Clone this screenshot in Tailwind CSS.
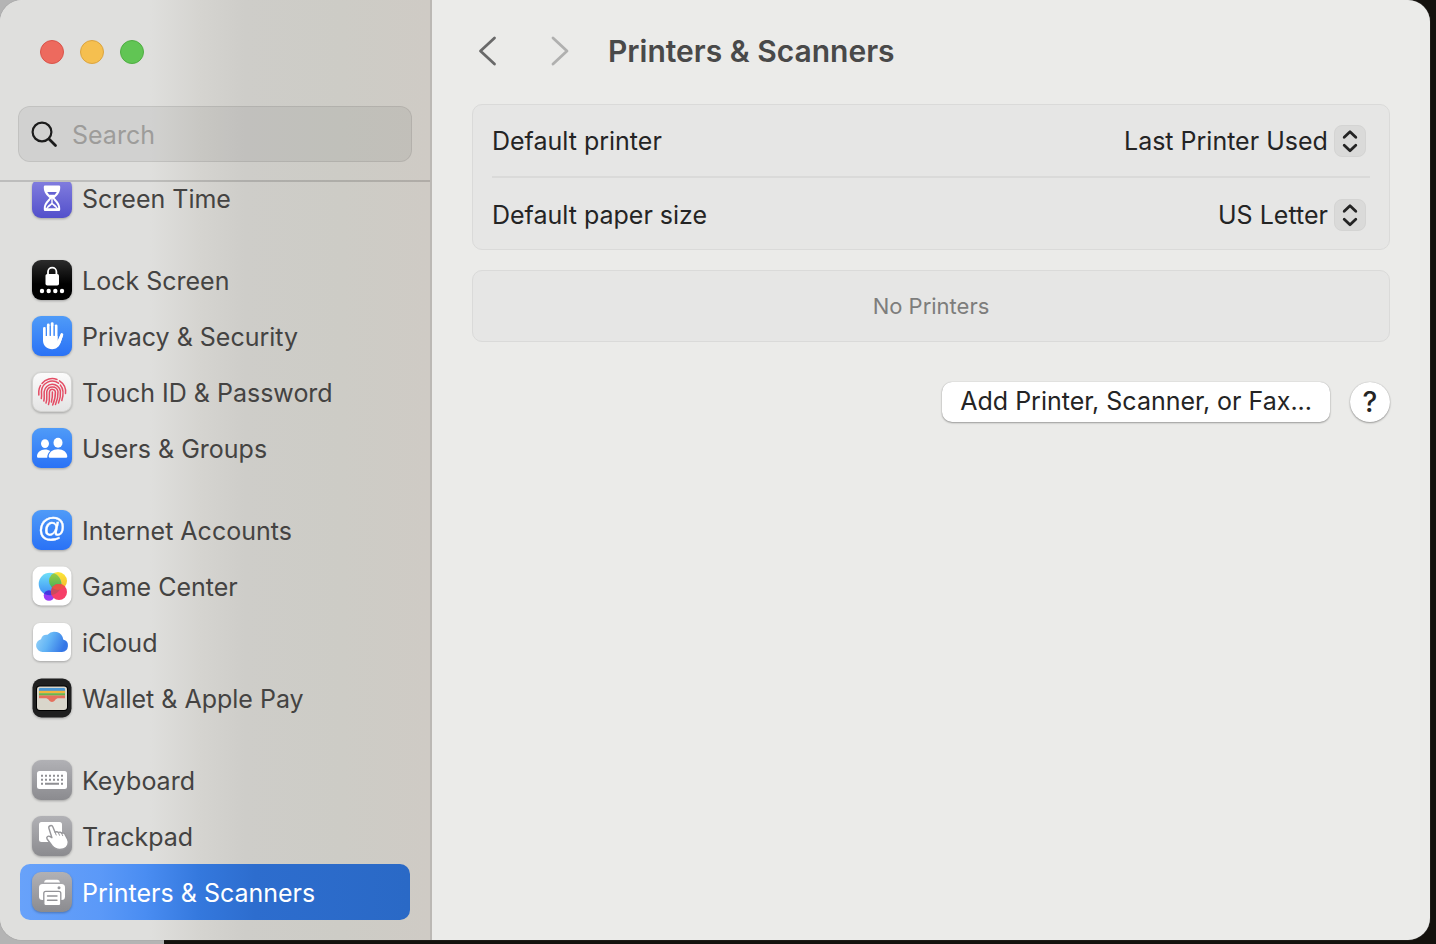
<!DOCTYPE html>
<html lang="en">
<head>
<meta charset="utf-8">
<meta name="viewport" content="width=device-width, initial-scale=1">
<title>Printers &amp; Scanners</title>
<script src="https://cdn.jsdelivr.net/npm/@tailwindcss/browser@4"></script>
</head>
<body class="font-['Inter',sans-serif] text-[25px] leading-8 text-[#242424]">
<div class="min-h-screen flex pr-1.5 pb-1 bg-[linear-gradient(90deg,#b4b4b4_164px,#14110d_164px)]">
  <div class="flex-1 min-w-0 flex rounded-[22px] overflow-hidden bg-[#ebebe9] shadow-[0_0_1px_#777]">

    <aside class="w-[432px] shrink-0 flex flex-col border-r-2 border-[#bbb8b4] bg-[linear-gradient(90deg,#dfdfdd_0px,#dfdfdd_150px,#d5d4d0_200px,#cecdc9_245px,#cdccc6_340px,#cfcbc5_430px)]">
      <header class="h-[182px] shrink-0 border-b-2 border-black/15 pt-10 px-[18px]">
        <div class="flex gap-4 pl-[22px]">
          <button aria-label="Close" class="size-6 rounded-full bg-[#ed6a5e] border border-[#d9544a]"></button>
          <button aria-label="Minimize" class="size-6 rounded-full bg-[#f5bf4f] border border-[#dba440]"></button>
          <button aria-label="Zoom" class="size-6 rounded-full bg-[#61c554] border border-[#4fae42]"></button>
        </div>
        <label class="mt-[42px] h-14 flex items-center gap-[13px] px-3 pt-0.5 rounded-xl bg-black/6 border border-black/8">
          <svg class="size-7 shrink-0" viewBox="0 0 28 28" fill="none" stroke="#1c1c1c" stroke-width="2.200" stroke-linecap="round"><circle cx="11" cy="11" r="9.400"/><path d="M18 18l6.500 6.500" stroke-width="2.800"/></svg>
          <input type="text" aria-label="Search" placeholder="Search" class="min-w-0 flex-1 bg-transparent outline-none placeholder:text-[#9d9c9a]">
        </label>
      </header>

      <nav class="flex-1 overflow-hidden px-5 text-[#444342]">
        <div class="-mt-3 flex flex-col gap-[26px]">
          <ul>
            <li><a href="#" class="h-14 flex items-center gap-[10px] px-3">
              <svg class="size-10 shrink-0 drop-shadow-[0_1px_1px_#0004]" viewBox="0 0 40 40"><defs><linearGradient id="gp" x2="0" y2="1"><stop stop-color="#8581e0"/><stop offset="1" stop-color="#5350cb"/></linearGradient></defs><rect width="40" height="40" rx="9" fill="url(#gp)"/><path d="M13 7.500h14q1.200 0 1.200 1.200v1c0 5-3 7.500-5.700 10.300 2.700 3 5.700 5.500 5.700 10.500v1q0 1.500-1.200 1.500H13q-1.200 0-1.200-1.500v-1c0-5 3-7.500 5.700-10.500-2.700-2.800-5.700-5.300-5.700-10.300v-1q0-1.200 1.200-1.200z" fill="#fff"/><path d="M15.200 14h9.600l-2 2.800h-5.600zM19.300 20.500v4.500c-1.500 1.500-4 2.500-4.600 4.800h-1c.4-4 3.800-6.300 5.600-9.300zM20.700 20.500v4.500c1.500 1.500 4 2.500 4.600 4.800h1c-.4-4-3.800-6.300-5.600-9.300zM15.500 30.300q2-1.300 4.500-3.800 2.500 2.500 4.500 3.800z" fill="#6361d2"/></svg>
              <span class="pt-0.5">Screen Time</span></a></li>
          </ul>
          <ul>
            <li><a href="#" class="h-14 flex items-center gap-[10px] px-3">
              <svg class="size-10 shrink-0 drop-shadow-[0_1px_1px_#0004]" viewBox="0 0 40 40"><defs><linearGradient id="gk" x2="0" y2="1"><stop stop-color="#2c2c2c"/><stop offset=".6" stop-color="#000"/></linearGradient></defs><rect width="40" height="40" rx="9" fill="url(#gk)"/><rect x="13.500" y="14" width="13.500" height="11.500" rx="1.800" fill="#fff"/><path d="M16 15v-3.200a4.200 4.200 0 0 1 8.400 0V15" fill="none" stroke="#fff" stroke-width="1.800"/><g fill="#fff"><circle cx="10" cy="31" r="2.200"/><circle cx="16.700" cy="31" r="2.200"/><circle cx="23.300" cy="31" r="2.200"/><circle cx="30" cy="31" r="2.200"/></g></svg>
              <span class="pt-0.5">Lock Screen</span></a></li>
            <li><a href="#" class="h-14 flex items-center gap-[10px] px-3">
              <svg class="size-10 shrink-0 drop-shadow-[0_1px_1px_#0004]" viewBox="0 0 40 40"><defs><linearGradient id="gb" x2="0" y2="1"><stop stop-color="#4f9bf8"/><stop offset="1" stop-color="#2a72f6"/></linearGradient></defs><rect width="40" height="40" rx="9" fill="url(#gb)"/><g stroke="#fff" stroke-width="2.800" stroke-linecap="round" fill="none"><path d="M12.400 12.500V24M16.300 9V23M20.200 7.600V23M24.100 9.800V24M29.900 18.500L27.300 26"/></g><path d="M11 20h14.500v4.700l3-6.200 2.600.8-2.500 7.200c-1.200 4-4.400 6.700-8.400 6.700-5.200 0-9.200-3.700-9.200-9z" fill="#fff"/><path d="M14.350 12v8M18.250 10v9.500M22.150 10v9.500" stroke="#3d88f7" stroke-width=".9"/></svg>
              <span class="pt-0.5">Privacy &amp; Security</span></a></li>
            <li><a href="#" class="h-14 flex items-center gap-[10px] px-3">
              <svg class="size-10 shrink-0 drop-shadow-[0_1px_1px_#0004]" viewBox="0 0 40 40"><defs><linearGradient id="gw" x2="0" y2="1"><stop stop-color="#fbfbfb"/><stop offset="1" stop-color="#e4e4e4"/></linearGradient></defs><rect x=".5" y=".5" width="39" height="39" rx="8.500" fill="url(#gw)" stroke="#d2d2d0"/><g fill="none" stroke="#e44c64" stroke-width="1.500" stroke-linecap="round"><path d="M10 11.500a13.300 13.300 0 0 1 15-4M27.500 8.800a13.300 13.300 0 0 1 6 12.700M6.800 23v-4a13 13 0 0 1 1.700-5.500"/><path d="M9.300 26.500c.8-3-.1-5 .2-7.500a10.700 10.700 0 0 1 17-7.800M28.300 13c3.500 4 3.200 10 1.500 15.500"/><path d="M11.800 29c1-3.500.1-6.500.4-9.500a8.200 8.200 0 0 1 16.200-.5c.4 4-.3 8-1.900 12"/><path d="M14 31c1.500-4 .5-8 .8-11.500a5.700 5.700 0 0 1 11.200.2c.2 4.500-.8 9-2.500 12.800"/><path d="M16.500 32.500c1.700-4.500.5-9.500 1-12.800a3 3 0 0 1 5.900.3c.2 4.500-1 9-2.700 13"/><path d="M20.400 20c.2 4-.2 7-1 10"/></g></svg>
              <span class="pt-0.5">Touch ID &amp; Password</span></a></li>
            <li><a href="#" class="h-14 flex items-center gap-[10px] px-3">
              <svg class="size-10 shrink-0 drop-shadow-[0_1px_1px_#0004]" viewBox="0 0 40 40"><rect width="40" height="40" rx="9" fill="url(#gb)"/><g fill="#fff"><ellipse cx="13" cy="15.600" rx="4" ry="4.400"/><ellipse cx="26" cy="14.700" rx="4.500" ry="5"/><path d="M5 28.500c0-4 3.500-7 8-7 2.200 0 4 .6 5.300 1.600-1.800 1.500-3 3.600-3.100 6.700H6.200q-1.200 0-1.200-1.300zM16.700 28.500c0-4 4-7.200 9.300-7.200s9.300 3.200 9.300 7.200q0 1.300-1.300 1.300H18q-1.300 0-1.300-1.300z"/></g></svg>
              <span class="pt-0.5">Users &amp; Groups</span></a></li>
          </ul>
          <ul>
            <li><a href="#" class="h-14 flex items-center gap-[10px] px-3">
              <svg class="size-10 shrink-0 drop-shadow-[0_1px_1px_#0004] font-['Liberation_Sans',sans-serif]" viewBox="0 0 40 40" aria-hidden="true"><rect width="40" height="40" rx="9" fill="url(#gb)"/><text x="20" y="27" text-anchor="middle" font-size="28" fill="#fff" stroke="#fff" stroke-width=".3">@</text></svg>
              <span class="pt-0.5">Internet Accounts</span></a></li>
            <li><a href="#" class="h-14 flex items-center gap-[10px] px-3">
              <svg class="size-10 shrink-0 drop-shadow-[0_1px_1px_#0004]" viewBox="0 0 40 40"><defs><linearGradient id="c1" x2="0" y2="1"><stop stop-color="#6fe0f8"/><stop offset="1" stop-color="#3d8df5"/></linearGradient><linearGradient id="c2" x2="0" y2="1"><stop stop-color="#fbe83a"/><stop offset="1" stop-color="#f5b52c"/></linearGradient><linearGradient id="c3" x2="0" y2="1"><stop stop-color="#a4cf3c"/><stop offset="1" stop-color="#3eae5f"/></linearGradient><clipPath id="k1"><circle cx="18" cy="18" r="11.300"/></clipPath><clipPath id="k2"><circle cx="27" cy="26" r="8"/></clipPath></defs><rect x=".5" y=".5" width="39" height="39" rx="8.500" fill="#fff"/><circle cx="17" cy="29.500" r="5.300" fill="#9a3cf5"/><circle cx="26" cy="15" r="9" fill="url(#c2)"/><circle cx="18" cy="18" r="11.300" fill="url(#c1)"/><circle cx="26" cy="15" r="9" fill="url(#c3)" clip-path="url(#k1)"/><circle cx="17" cy="29.500" r="5.300" fill="#4636e0" clip-path="url(#k1)"/><circle cx="27" cy="26" r="8" fill="#f63f68"/><circle cx="18" cy="18" r="11.300" fill="#c94a5d" clip-path="url(#k2)"/><circle cx="26" cy="15" r="9" fill="#f0553f" opacity=".8" clip-path="url(#k2)"/></svg>
              <span class="pt-0.5">Game Center</span></a></li>
            <li><a href="#" class="h-14 flex items-center gap-[10px] px-3">
              <svg class="size-10 shrink-0 drop-shadow-[0_1px_1px_#0004]" viewBox="0 0 40 40"><defs><linearGradient id="ic" x2="1" y2=".3"><stop stop-color="#9bd5f8"/><stop offset=".5" stop-color="#62b4f5"/><stop offset="1" stop-color="#3577e6"/></linearGradient></defs><rect x="1" y="1" width="38" height="38" rx="7" fill="#fff"/><path d="M10.500 30A6.500 6.500 0 0 1 9 17.200a6 6 0 0 1 6.500-4.400 9 9 0 0 1 15.700 4.800A6.300 6.300 0 0 1 30 30z" fill="url(#ic)"/></svg>
              <span class="pt-0.5">iCloud</span></a></li>
            <li><a href="#" class="h-14 flex items-center gap-[10px] px-3">
              <svg class="size-10 shrink-0 drop-shadow-[0_1px_1px_#0004]" viewBox="0 0 40 40"><rect x=".5" y=".5" width="39" height="39" rx="9" fill="#1f1f1f"/><rect x="4" y="7.500" width="32" height="25.500" rx="4" fill="#000"/><rect x="5" y="8.500" width="30" height="23.500" rx="3" fill="#d9d6cb"/><path fill="#4a97d4" d="M7 11q0-1 1-1h24q1 0 1 1v2H7z"/><path fill="#f2b43c" d="M7 12.800h26v2.400H7z"/><path fill="#68b64c" d="M7 15.200h26v2.400H7z"/><path fill="#e5705d" d="M7 17.600h26v2.600h-6c-2 0-3 .6-4 2-1.600 2.300-4.400 2.300-6 0-1-1.400-2-2-4-2H7z"/></svg>
              <span class="pt-0.5">Wallet &amp; Apple Pay</span></a></li>
          </ul>
          <ul>
            <li><a href="#" class="h-14 flex items-center gap-[10px] px-3">
              <svg class="size-10 shrink-0 drop-shadow-[0_1px_1px_#0004]" viewBox="0 0 40 40"><defs><linearGradient id="gg" x2="0" y2="1"><stop stop-color="#b1b1b5"/><stop offset="1" stop-color="#8b8b8f"/></linearGradient></defs><rect width="40" height="40" rx="9" fill="url(#gg)"/><rect x="5" y="11" width="30" height="18" rx="2.500" fill="#fff"/><g stroke="#8f8f93" stroke-width="2" fill="none"><path stroke-dasharray="2 2" d="M9 15.700h22.500M9 19.700h22.500"/><path d="M9 23.700h2M13 23.700h14M29 23.700h2"/></g></svg>
              <span class="pt-0.5">Keyboard</span></a></li>
            <li><a href="#" class="h-14 flex items-center gap-[10px] px-3">
              <svg class="size-10 shrink-0 drop-shadow-[0_1px_1px_#0004]" viewBox="0 0 40 40"><rect width="40" height="40" rx="9" fill="url(#gg)"/><rect x="7" y="6" width="23" height="20" rx="2.500" fill="#fff"/><path d="M16.900 12.300c-.8-2.500 3-3.900 4-1.400l2.300 5.500c.8-1 2.700-.9 3.300.3.900-.9 2.700-.6 3.200.6 1.100-.7 2.700-.2 3.300 1l2.400 4.500c2.200 4.500.2 9-4 10.200-5 1.400-9-.4-11.500-3.500l-4.800-6.500c-1.200-1.900.9-3.500 2.500-2.600l2.300 1.300z" fill="#fff" stroke="#97979b" stroke-width="1.400" stroke-linejoin="round"/><path d="M23.200 16.500l1 2.500M26.500 16.900l1 2.400M29.700 17.500l1 2.200" stroke="#97979b" stroke-width="1" stroke-linecap="round"/></svg>
              <span class="pt-0.5">Trackpad</span></a></li>
            <li><a href="#" aria-current="page" class="h-14 flex items-center gap-[10px] px-3 rounded-[10px] text-white bg-[linear-gradient(90deg,#68a2fa_0px,#5b99f8_80px,#4a8df2_125px,#3478dd_180px,#2d6dce_235px,#2a69c6_100%)]">
              <svg class="size-10 shrink-0 drop-shadow-[0_1px_1px_#0004]" viewBox="0 0 40 40"><rect width="40" height="40" rx="9" fill="url(#gg)"/><path d="M12 10.500q.3-2.700 2.600-2.700h10.800q2.300 0 2.600 2.700z" fill="#fff"/><path d="M10.500 12h19q3.500 0 3.500 3.500v9q0 3.500-3.500 3.500h-19Q7 28 7 24.500v-9q0-3.500 3.500-3.500z" fill="#fff"/><circle cx="27" cy="15.800" r="1.500" fill="#99999d"/><rect x="11.800" y="19.300" width="17" height="14.400" rx="2" fill="#fff" stroke="#939397" stroke-width="1.300"/><path d="M15.500 24h9.500M15.500 28.300h9.500" stroke="#939397" stroke-width="1.400" stroke-linecap="round"/></svg>
              <span class="pt-0.5">Printers &amp; Scanners</span></a></li>
          </ul>
        </div>
      </nav>
    </aside>

    <main class="flex-1 min-w-0 px-10">
      <header class="h-[102px] mb-0.5 flex items-center">
        <button aria-label="Back" class="w-[72px]"><svg class="w-8 h-8" viewBox="0 0 32 32" fill="none" stroke="#696969" stroke-width="2.800" stroke-linecap="round" stroke-linejoin="round"><path d="M22.500 3L8.500 16l14 13"/></svg></button>
        <button aria-label="Forward" class="w-[64px]"><svg class="w-8 h-8" viewBox="0 0 32 32" fill="none" stroke="#b0b0af" stroke-width="2.800" stroke-linecap="round" stroke-linejoin="round"><path d="M9 3l14 13L9 29"/></svg></button>
        <h1 class="text-[30px] font-semibold text-[#494949]">Printers &amp; Scanners</h1>
      </header>

      <section class="rounded-[10px] border border-[#dadad9] bg-[#e6e6e5] px-[19px]">
        <div class="h-[73px] border-b-2 border-[#dadad9] flex items-center justify-between">
          <label for="printer">Default printer</label>
          <div class="relative flex items-center mr-1">
            <select id="printer" class="appearance-none bg-transparent pr-[38px]"><option>Last Printer Used</option></select>
            <span class="absolute right-0 size-8 rounded-lg bg-[#dadad9] border border-[#d4d4d3] pointer-events-none"><svg class="size-full" viewBox="0 0 30 30" fill="none" stroke="#242424" stroke-width="2.800" stroke-linecap="round" stroke-linejoin="round"><path d="M9.200 11.300L15 5.800l5.800 5.500M9.200 19.200l5.800 5.500 5.800-5.500"/></svg></span>
          </div>
        </div>
        <div class="h-[71px] flex items-center justify-between pt-0.5">
          <label for="paper">Default paper size</label>
          <div class="relative flex items-center mr-1">
            <select id="paper" class="appearance-none bg-transparent pr-[38px]"><option>US Letter</option></select>
            <span class="absolute right-0 size-8 rounded-lg bg-[#dadad9] border border-[#d4d4d3] pointer-events-none"><svg class="size-full" viewBox="0 0 30 30" fill="none" stroke="#242424" stroke-width="2.800" stroke-linecap="round" stroke-linejoin="round"><path d="M9.200 11.300L15 5.800l5.800 5.500M9.200 19.200l5.800 5.500 5.800-5.500"/></svg></span>
          </div>
        </div>
      </section>

      <section class="mt-5 h-[72px] rounded-[10px] border border-[#dadad9] bg-[#e6e6e5] flex items-center justify-center text-[22px] text-[#7d7d7c]">No Printers</section>

      <div class="mt-10 flex justify-end items-center gap-5">
        <button class="h-10 px-[18px] pb-0.5 rounded-[10px] bg-white shadow-[0_1px_2px_#0005,0_0_1px_#0004]">Add Printer, Scanner, or Fax...</button>
        <button aria-label="Help" class="size-10 rounded-full bg-white text-[28px] font-medium shadow-[0_1px_2px_#0005,0_0_1px_#0004]">?</button>
      </div>
    </main>
  </div>
</div>
</body>
</html>
